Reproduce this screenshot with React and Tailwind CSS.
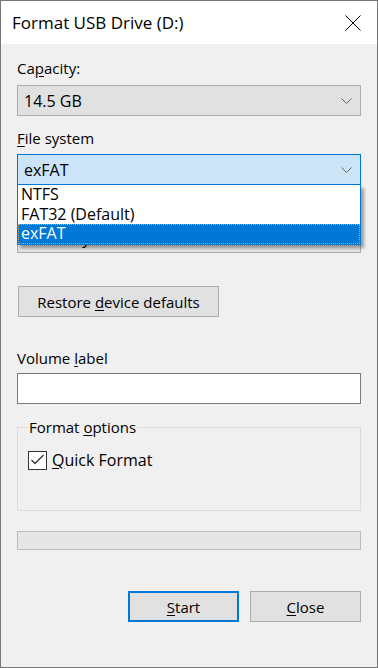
import React from 'react';

const font = { fontFamily: '"Open Sans", "Noto Sans", sans-serif' };

function Chevron() {
  return (
    <svg width="11" height="6" viewBox="0 0 11 6" className="flex-shrink-0">
      <path d="M0.5 0.5 L5.5 5.5 L10.5 0.5" fill="none" stroke="#606060" strokeWidth="1" />
    </svg>
  );
}

function Select({ value, active }) {
  return (
    <div
      className={`h-[31px] flex items-center justify-between pl-[6px] pr-[8px] border ${
        active ? 'bg-[#cce4f7] border-[#0078d7]' : 'bg-[#e1e1e1] border-[#adadad]'
      }`}
    >
      <span className="text-[16px]">{value}</span>
      <Chevron />
    </div>
  );
}

export default function App() {
  const options = ['NTFS', 'FAT32 (Default)', 'exFAT'];

  return (
    <div
      className="w-[378px] h-[668px] flex flex-col bg-[#f0f0f0] border border-[#777777] text-[15px] text-black leading-[20px]"
      style={font}
    >
      {/* Title bar */}
      <div className="h-[43px] bg-white flex items-center justify-between pl-[11px] pr-[16px] flex-shrink-0">
        <span className="text-[17px]">Format USB Drive (D:)</span>
        <svg width="16" height="16" viewBox="0 0 16 16">
          <path d="M0.5 0.5 L15.5 15.5 M15.5 0.5 L0.5 15.5" stroke="#000" strokeWidth="1" />
        </svg>
      </div>

      <div className="flex flex-col px-[16px]">
        <div className="mt-[14px]">
          Ca<u className="underline-offset-2">p</u>acity:
        </div>
        <div className="mt-[7px]">
          <Select value="14.5 GB" />
        </div>

        <div className="mt-[12px]">
          <u className="underline-offset-2">F</u>ile system
        </div>
        <div className="mt-[6px] relative">
          <Select value="exFAT" active />
          {/* Open drop-down list, covers the allocation size row */}
          <div className="absolute top-full left-0 right-0 z-10 bg-white border border-[#0078d7] border-t-0 shadow-[3px_3px_3px_rgba(0,0,0,0.35)]">
            {options.map((o, i) => (
              <div
                key={o}
                className={`h-[19.5px] leading-[19px] pl-[3px] text-[16px] ${
                  i === 2
                    ? 'bg-[#0078d7] text-white outline outline-1 outline-dotted outline-offset-[-1px] outline-[#e0a060]'
                    : ''
                }`}
              >
                {o}
              </div>
            ))}
          </div>
        </div>

        {/* hidden "Allocation unit size" label row */}
        <div className="mt-[11px] h-[20px]" />
        <div className="mt-[6px]">
          <Select value="32 kilobytes" />
        </div>

        <button className="mt-[33px] self-start w-[201px] h-[31px] bg-[#e1e1e1] border border-[#adadad] ml-[1px]">
          Restore <u className="underline-offset-2">d</u>evice defaults
        </button>

        <div className="mt-[31px]">
          Volume <u className="underline-offset-2">l</u>abel
        </div>
        <div className="mt-[5px] h-[31px] bg-white border border-[#7a7a7a]" />

        {/* Format options group */}
        <div className="mt-[23px] h-[84px] border border-[#dcdcdc] flex flex-col pl-[10px]">
          <div className="-mt-[11px] self-start px-[1px] bg-[#f0f0f0] leading-[20px]">
            Format <u className="underline-offset-2">o</u>ptions
          </div>
          <div className="mt-[13px] flex items-center gap-[5px]">
            <div className="w-[19px] h-[19px] border border-[#333333] bg-white flex items-center justify-center">
              <svg width="15" height="12" viewBox="0 0 15 12">
                <path d="M1.5 6 L5 9.5 L13.5 1" fill="none" stroke="#333" strokeWidth="1.3" />
              </svg>
            </div>
            <span className="text-[16px]">
              <u className="underline-offset-2">Q</u>uick Format
            </span>
          </div>
        </div>

        <div className="mt-[20px] h-[19px] bg-[#e6e6e6] border border-[#bcbcbc]" />

        <div className="mt-[41px] flex justify-end gap-[11px]">
          <button className="w-[111px] h-[31px] bg-[#e1e1e1] border-2 border-[#0078d7]">
            <u className="underline-offset-2">S</u>tart
          </button>
          <button className="w-[111px] h-[31px] bg-[#e1e1e1] border border-[#adadad]">
            <u className="underline-offset-2">C</u>lose
          </button>
        </div>
      </div>
    </div>
  );
}
